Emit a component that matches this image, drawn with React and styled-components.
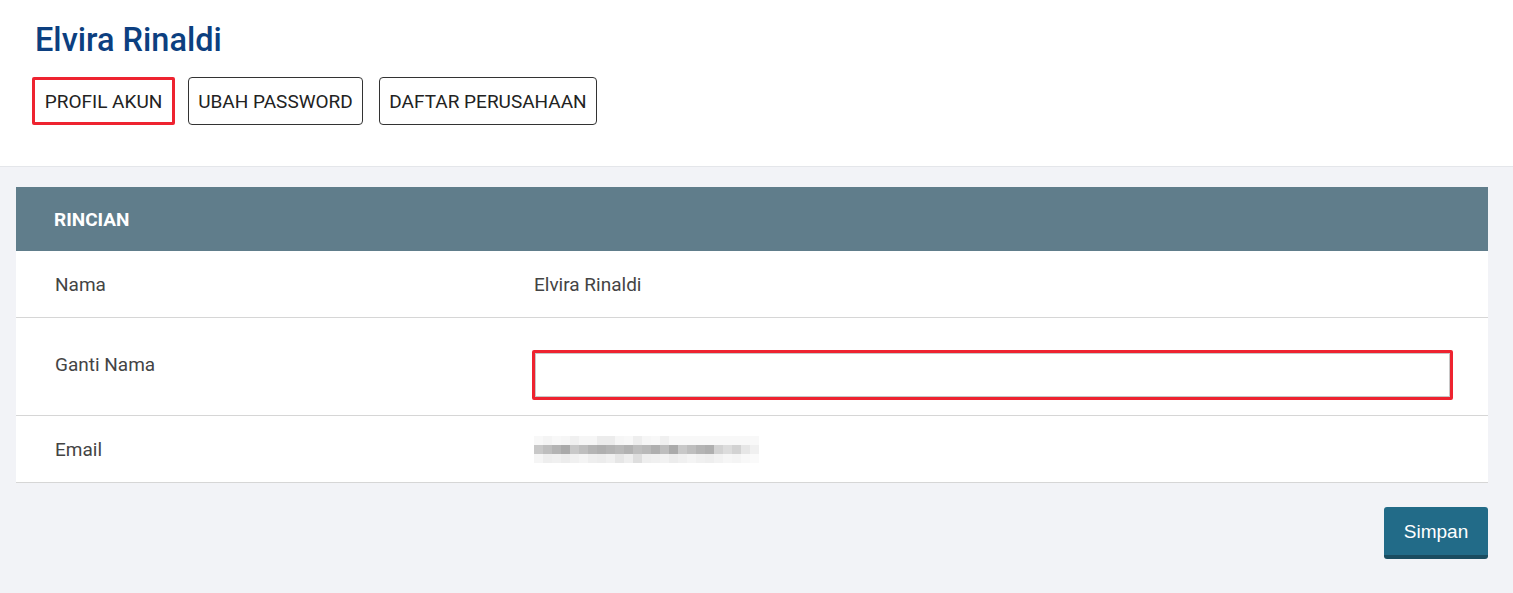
import React from "react";
import styled, { createGlobalStyle } from "styled-components";

const Global = createGlobalStyle`
  html, body { margin: 0; padding: 0; background: #f2f3f7; }
  body { font-family: Roboto, "Liberation Sans", sans-serif; }
  * { box-sizing: border-box; }
`;

const Page = styled.div`
  width: 1513px;
  min-height: 593px;
  background: #f2f3f7;
`;

const Header = styled.header`
  background: #fff;
  border-bottom: 1px solid #e4e6ea;
  height: 167px;
  padding: 22px 0 0 35px;
`;

const Title = styled.h1`
  margin: 0;
  font-size: 32.5px;
  line-height: 36px;
  font-weight: 500;
  color: #0c3f80;
`;

const Tabs = styled.nav`
  display: flex;
  margin-top: 19px;
  margin-left: -3px;
`;

const Tab = styled.button`
  width: ${(p) => p.$w}px;
  height: 48px;
  margin-right: ${(p) => p.$gap || 0}px;
  padding: 0;
  border: ${(p) => (p.$active ? "3px solid #ee2330" : "1px solid #333")};
  border-radius: ${(p) => (p.$active ? "2px" : "4px")};
  background: #fff;
  font-family: Roboto, sans-serif;
  font-size: 19px;
  color: #222;
  cursor: pointer;
`;

const Panel = styled.section`
  margin: 20px 25px 0 16px;
  background: #fff;
`;

const PanelHead = styled.div`
  height: 64px;
  background: #607d8b;
  display: flex;
  align-items: center;
  padding-left: 38px;
  font-size: 19px;
  font-weight: 700;
  color: #fff;
`;

const Row = styled.div`
  display: grid;
  grid-template-columns: 479px 1fr;
  align-items: ${(p) => (p.$top ? "start" : "center")};
  min-height: ${(p) => p.$h}px;
  padding: ${(p) => (p.$top ? "32px 34px 14px 39px" : "0 34px 0 39px")};
  border-bottom: 1px solid #d6d6d6;
  font-size: 19px;
  color: #444;
`;

const Label = styled.div`
  padding-top: ${(p) => (p.$pad ? "3px" : "0")};
`;

const Value = styled.div``;

const Input = styled.input`
  display: block;
  width: 921px;
  height: 50px;
  margin-left: -2px;
  border: 3px solid #ee2330;
  border-radius: 2px;
  box-shadow: inset 0 0 0 1px #c8c8c8;
  background: #fff;
  outline: none;
`;

const Footer = styled.div`
  display: flex;
  justify-content: flex-end;
  margin: 24px 25px 0 0;
`;

const SaveButton = styled.button`
  width: 104px;
  height: 52px;
  border: none;
  border-bottom: 4px solid #1a4c60;
  border-radius: 3px;
  background: #226b88;
  color: #fff;
  font-family: "Liberation Sans", Arial, sans-serif;
  font-size: 19px;
  padding-top: 3px;
  cursor: pointer;
`;

const shades = [
  [248,244,248,246,240,246,246,236,236,246,248,238,246,248,240,248,248,248,248,248,248,248,248,248,248],
  [200,190,180,170,200,190,180,175,180,185,178,190,185,175,190,170,200,190,180,175,210,220,210,230,240],
  [245,238,240,236,240,244,238,236,240,230,238,222,238,240,242,236,240,244,240,238,242,246,244,248,250],
];

const Blur = () => (
  <svg width="225" height="27" viewBox="0 0 225 27" style={{ display: "block" }}>
    {shades.map((row, r) =>
      row.map((v, c) => (
        <rect key={r + "-" + c} x={c * 9} y={r * 9} width="9" height="9" fill={`rgb(${v},${v},${v})`} />
      ))
    )}
  </svg>
);

export default function App() {
  return (
    <Page>
      <Global />
      <Header>
        <Title>Elvira Rinaldi</Title>
        <Tabs>
          <Tab $active $w={143} $gap={13}>PROFIL AKUN</Tab>
          <Tab $w={175} $gap={16}>UBAH PASSWORD</Tab>
          <Tab $w={218}>DAFTAR PERUSAHAAN</Tab>
        </Tabs>
      </Header>
      <Panel>
        <PanelHead>RINCIAN</PanelHead>
        <Row $h={67}>
          <Label>Nama</Label>
          <Value>Elvira Rinaldi</Value>
        </Row>
        <Row $h={98} $top>
          <Label $pad>Ganti Nama</Label>
          <Value>
            <Input type="text" />
          </Value>
        </Row>
        <Row $h={67}>
          <Label>Email</Label>
          <Value>
            <Blur />
          </Value>
        </Row>
      </Panel>
      <Footer>
        <SaveButton>Simpan</SaveButton>
      </Footer>
    </Page>
  );
}
